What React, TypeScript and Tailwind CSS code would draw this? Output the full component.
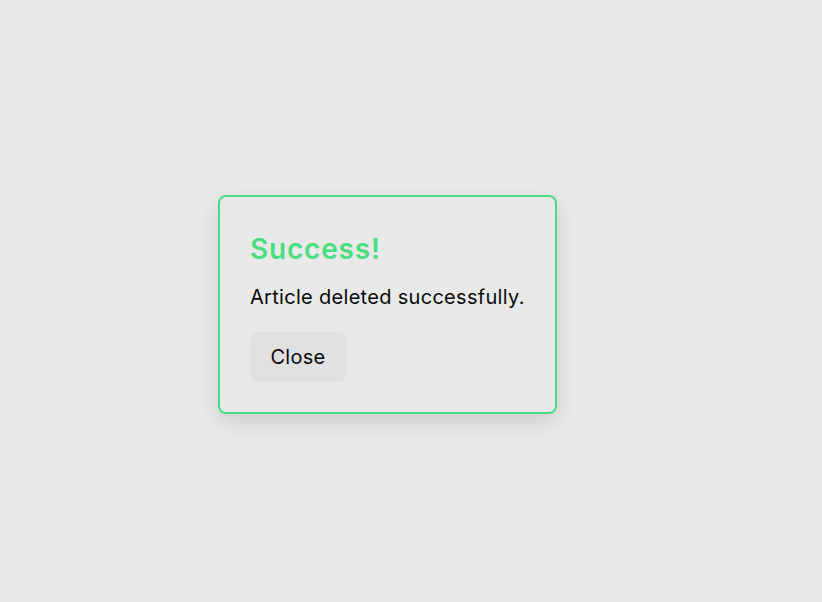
export default function App() {
  return (
    <div className="min-h-screen w-full bg-[#e9e9e9] pl-[218px] pt-[195px]" style={{ fontFamily: "Inter, 'Liberation Sans', sans-serif" }}>
      <div className="w-[339px] rounded-lg border-2 border-[#4ade80] bg-[#e9e9e9] p-[30px] shadow-[0_8px_20px_rgba(0,0,0,0.12)]">
        <h2 className="text-[28px] font-semibold leading-[44px] tracking-[0.8px] text-[#4ade80]">Success!</h2>
        <p className="mt-[11px] text-[20px] leading-[30px] tracking-[0.3px] text-[#0a0a0a]">Article deleted successfully.</p>
        <button className="mt-[20px] h-[50px] w-[96px] rounded-lg bg-[#e0e0e0] text-[20px] tracking-[0.3px] text-[#0a0a0a]">Close</button>
      </div>
    </div>
  );
}
